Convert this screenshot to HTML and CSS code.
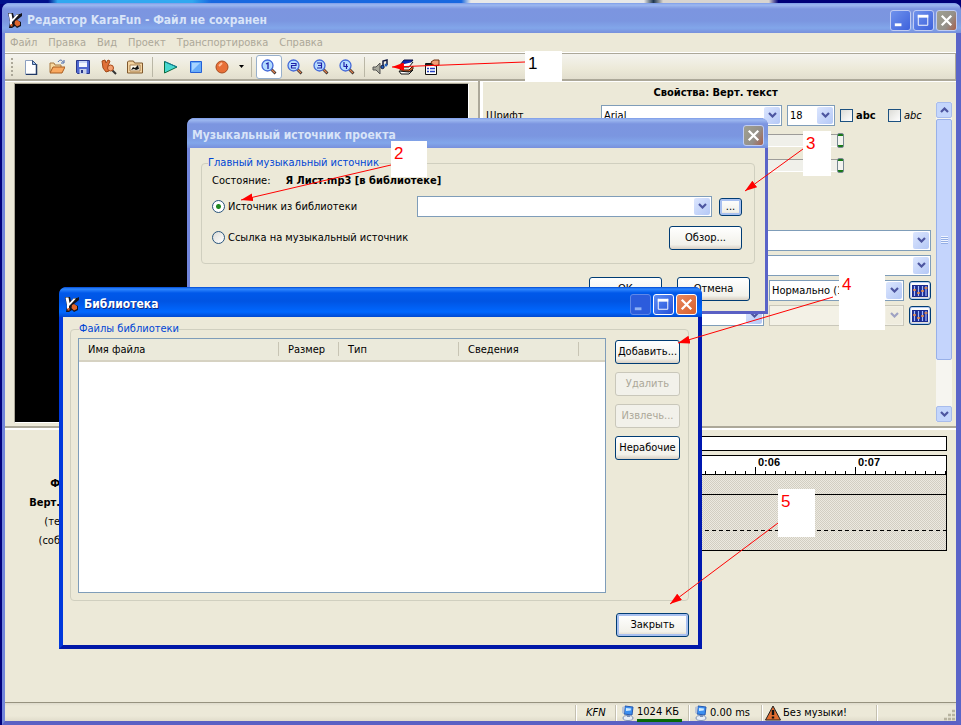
FILE: index.html
```
<!DOCTYPE html>
<html lang="ru">
<head>
<meta charset="utf-8">
<title>Редактор KaraFun</title>
<link rel="stylesheet" href="styles.css">
</head>
<body>
<svg class="defs" aria-hidden="true">
  <defs>
    <symbol id="logo" viewBox="0 0 16 16">
      <path d="M1 1h5l1 4 3-3h3l2-1v3l-5 4 4 2v4l-4 2-2-2-3 2H2l1-6z" fill="#14141c"/>
      <path d="M1.500 1.500h3L5.500 7l4-4.500h2.500L7 8l-2 2v3H3V9z" fill="#fff"/>
      <path d="M8 9l2-1 3 2v3l-3 1.500L7.500 12z" fill="#e0662c"/>
      <path d="M3.500 12h2v2.500h-2z" fill="#e0662c"/>
    </symbol>
    <symbol id="chevron" viewBox="0 0 9 6"><path d="M1 1l3.500 3.500L8 1" fill="none" stroke="#4d56a0" stroke-width="2.200"/></symbol>
    <symbol id="lens" viewBox="0 0 16 16">
      <path d="M10 10l4.500 4.500" stroke="#222" stroke-width="2.600"/><path d="M10 10l4 4" stroke="#e08050" stroke-width="1.400"/>
      <circle cx="6.500" cy="6.500" r="5.500" fill="#b4dcff" stroke="#4468d8" stroke-width="1.300"/>
    </symbol>
    <symbol id="mixer" viewBox="0 0 16 12">
      <rect width="16" height="12" fill="#1c2c90"/>
      <path d="M2.500 1v10M6.500 1v10M10.500 1v10M14 1v10" stroke="#a8bcff" stroke-width="1.200"/>
      <path d="M1 5h3M5 8h3M9 6h3M12.500 3h3" stroke="#f08838" stroke-width="1.500"/>
    </symbol>
    <symbol id="pc" viewBox="0 0 14 16">
      <path d="M4 1l8 1-1 8-8-1z" fill="#3c8ff0" stroke="#2458b0"/><path d="M5 3l5 .6-.3 2L5 6z" fill="#cfeaff"/>
      <path d="M1 2l3-1-1 8-2-1z" fill="#b8c4d8"/>
      <ellipse cx="7" cy="13" rx="5" ry="2.500" fill="#e8eef6" stroke="#8294b4"/><path d="M6 10h3v2H6z" fill="#7890b8"/>
    </symbol>
  </defs>
</svg>

<main class="window">
  <header class="titlebar">
    <svg class="i16"><use href="#logo"/></svg>
    <h1>Редактор KaraFun - Файл не сохранен</h1>
    <div class="caption">
      <button class="cap" aria-label="Свернуть"><svg class="i20" viewBox="0 0 20 20"><path d="M4 14.500h7" stroke="#fff" stroke-width="3"/></svg></button>
      <button class="cap" aria-label="Развернуть"><svg class="i20" viewBox="0 0 20 20"><path d="M4.500 4v11h10V4" fill="none" stroke="#fff"/><path d="M4 5.500h11" stroke="#fff" stroke-width="3"/></svg></button>
      <button class="cap cap-dim" aria-label="Закрыть окно"><svg class="i20" viewBox="0 0 20 20"><path d="M5 5l10 10M15 5l-10 10" stroke="#fff" stroke-width="2.400"/></svg></button>
    </div>
  </header>

  <nav class="menu">
    <button>Файл</button><button>Правка</button><button>Вид</button><button>Проект</button><button>Транспортировка</button><button>Справка</button>
  </nav>

  <div class="toolbar" role="toolbar">
    <span class="grip"></span>
    <button class="tool" aria-label="Новый"><svg class="i16" viewBox="0 0 16 16"><path d="M2.500 1.500h7l4 4v10h-11z" fill="#fff" stroke="#8ca0c0"/><path d="M13.500 5v10.500H3" fill="none" stroke="#223a66" stroke-width="1.500"/><path d="M9.500 1.500v4h4z" fill="#9fc0f0" stroke="#35507c"/></svg></button>
    <button class="tool" aria-label="Открыть"><svg class="i16" viewBox="0 0 16 16"><path d="M1 13V4h4l1 2h6v3" fill="#f7d9a0" stroke="#a87840"/><path d="M1 14L4 8h12l-3 6z" fill="#f9a960" stroke="#a85c20"/><path d="M9 3c2-3 4-2 5 0M15 1v3h-3" fill="none" stroke="#4464a8"/></svg></button>
    <button class="tool" aria-label="Сохранить"><svg class="i16" viewBox="0 0 16 16"><path d="M1.500 1.500h13v13h-12l-1-1z" fill="#5068d0" stroke="#29378c"/><path d="M4 2h8v6H4z" fill="#f2f6ff"/><path d="M4 3h8" stroke="#9db4ea"/><path d="M4.500 10h7v5h-7z" fill="#c8d0e8"/><path d="M6 11h2v3H6z" fill="#29378c"/></svg></button>
    <button class="tool" aria-label="Просмотр"><svg class="i16" viewBox="0 0 16 16"><path d="M1 2l3-1 1 3 2-3 2 1-2 5 1 5-3 1-3-4z" fill="#e07038" stroke="#a04818"/><path d="M11 11l4 4" stroke="#333" stroke-width="2"/><circle cx="9.500" cy="9" r="3" fill="#f4a070" stroke="#a84818"/></svg></button>
    <button class="tool" aria-label="Медиа"><svg class="i16" viewBox="0 0 16 16"><path d="M.5 14V3l1-1h5l1 2h8v10z" fill="#f3d3a0" stroke="#80582c"/><path d="M3 6h10v6H3z" fill="#fff8e8" stroke="#a88050"/><path d="M4 11l2-3 2 1 3-3 1 4-3 1-2-1z" fill="#111"/></svg></button>
    <span class="sep"></span>
    <button class="tool" aria-label="Пуск"><svg class="i16" viewBox="0 0 16 16"><path d="M2.500 2.500L15 8 2.500 14z" fill="#48d8d0" stroke="#0c6c40"/><path d="M2.500 2.500L15 8" stroke="#1480a0"/></svg></button>
    <button class="tool" aria-label="Стоп"><svg class="i16" viewBox="0 0 16 16"><path d="M2.500 2.500h11v11h-11z" fill="#68acf8" stroke="#2460d8"/><path d="M4 4h8L4 12z" fill="#a8d4ff"/></svg></button>
    <button class="tool" aria-label="Запись"><svg class="i16" viewBox="0 0 16 16"><circle cx="8" cy="8" r="6" fill="#e87038" stroke="#a84c20"/><path d="M5 7l3-3" stroke="#ffc09c" stroke-width="2"/></svg></button>
    <button class="tool tool-drop" aria-label="Варианты записи"><svg class="i5" viewBox="0 0 5 3"><path d="M0 0h5L2.500 3z"/></svg></button>
    <span class="sep"></span>
    <button class="tool tool-on" aria-label="Вид 1"><svg class="i16" viewBox="0 0 16 16"><use href="#lens"/><path d="M5 5l2-1v6" fill="none" stroke="#2020a8" stroke-width="1.300"/></svg></button>
    <button class="tool" aria-label="Вид 2"><svg class="i16" viewBox="0 0 16 16"><use href="#lens"/><path d="M4 4.500h5v2H4.500v2.500H9" fill="none" stroke="#2020a8" stroke-width="1.200"/></svg></button>
    <button class="tool" aria-label="Вид 3"><svg class="i16" viewBox="0 0 16 16"><use href="#lens"/><path d="M4 4h4.500v5H4M5 6.500h3" fill="none" stroke="#2020a8" stroke-width="1.200"/></svg></button>
    <button class="tool" aria-label="Вид 4"><svg class="i16" viewBox="0 0 16 16"><use href="#lens"/><path d="M5 3v4.500h4M7.500 5v5" fill="none" stroke="#2020a8" stroke-width="1.200"/></svg></button>
    <span class="sep sep-narrow"></span>
    <button class="tool" aria-label="Музыкальный источник"><svg class="i16" viewBox="0 0 16 16"><path d="M1 8h3l4-4v11l-4-4H1z" fill="#a8a89c" stroke="#555"/><path d="M11 8V2l4-1v5" fill="none" stroke="#101840" stroke-width="1.500"/><circle cx="10.500" cy="8" r="1.700" fill="#2060c0" stroke="#101840"/><circle cx="14" cy="6" r="1.500" fill="#2060c0"/></svg></button>
    <button class="tool" aria-label="Библиотека"><svg class="i16" viewBox="0 0 16 16"><path d="M6 1h9l-4 5H2z" fill="#1428b0" stroke="#081048"/><path d="M2 6v2h9l4-5" fill="#fff" stroke="#111"/><path d="M4 8l-2 3h9l4-4v3l-4 3H3" fill="#e06c30" stroke="#3c1808"/><path d="M1 12l2 3h8l4-4-4 2z" fill="#fff" stroke="#111"/></svg></button>
    <button class="tool" aria-label="Свойства"><svg class="i16" viewBox="0 0 16 16"><path d="M1.500 4.500h11v11h-11z" fill="#fff" stroke="#111"/><path d="M2 6h10" stroke="#222" stroke-width="2"/><path d="M3 9.500h2m1 0h5M3 12.500h2m1 0h5" stroke="#2440c0" stroke-width="1.500"/><path d="M7 3l3-2h5v5l-4 1-3-2z" fill="#f0a078" stroke="#703010"/></svg></button>
  </div>

  <section class="workspace">
    <div class="stage"><div class="video"></div></div>
    <div class="props">
      <form class="form">
        <h2>Свойства: Верт. текст</h2>
        <div class="row">
          <label class="row-label" for="font">Шрифт</label>
          <div class="combo grow"><select id="font"><option>Arial</option></select><svg class="drop"><use href="#chevron" x="4" y="5" width="9" height="6"/></svg></div>
          <div class="combo size-combo"><select aria-label="Размер шрифта"><option>18</option></select><svg class="drop"><use href="#chevron" x="4" y="5" width="9" height="6"/></svg></div>
          <label class="check bold"><input type="checkbox">abc</label>
          <label class="check italic"><input type="checkbox">abc</label>
        </div>
        <div class="row"><span class="row-label"></span><input class="slider" type="range" value="100" aria-label="Непрозрачность"></div>
        <div class="row"><span class="row-label"></span><input class="slider" type="range" value="100" aria-label="Контур"></div>
        <div class="row"></div>
        <div class="row"></div>
        <div class="row"><span class="row-label"></span><div class="combo grow"><select aria-label="Появление"></select><svg class="drop"><use href="#chevron" x="4" y="5" width="9" height="6"/></svg></div></div>
        <div class="row"><span class="row-label"></span><div class="combo grow"><select aria-label="Исчезание"></select><svg class="drop"><use href="#chevron" x="4" y="5" width="9" height="6"/></svg></div></div>
        <div class="row"><span class="row-label"></span><div class="combo grow"><select aria-label="Эффект"></select><svg class="drop"><use href="#chevron" x="4" y="5" width="9" height="6"/></svg></div><div class="combo mode"><select aria-label="Сглаживание"><option>Нормально (1</option></select><svg class="drop"><use href="#chevron" x="4" y="5" width="9" height="6"/></svg></div><button type="button" class="xp mix" aria-label="Настроить эффект"><svg><use href="#mixer"/></svg></button></div>
        <div class="row"><span class="row-label"></span><div class="combo grow"><select aria-label="Движение"></select><svg class="drop"><use href="#chevron" x="4" y="5" width="9" height="6"/></svg></div><div class="combo mode off"><select aria-label="Режим движения" disabled></select><svg class="drop"><use href="#chevron" x="4" y="5" width="9" height="6"/></svg></div><button type="button" class="xp mix" aria-label="Настроить движение"><svg><use href="#mixer"/></svg></button></div>
      </form>
      <div class="scroll">
        <button class="scroll-btn" aria-label="Вверх"><svg class="i9" viewBox="0 0 9 6"><path d="M1 5l3.500-3.500L8 5" fill="none" stroke="#4d56a0" stroke-width="2.200"/></svg></button>
        <div class="thumb"><span></span></div>
        <button class="scroll-btn last" aria-label="Вниз"><svg class="i9"><use href="#chevron"/></svg></button>
      </div>
    </div>
  </section>

  <section class="timeline">
    <div class="tracks"><b>Ф</b><b>Верт.</b><span>(те</span><span>(соб</span></div>
    <div class="lanes">
      <div class="overview"></div>
      <div class="grid">
        <div class="ruler"><span>0:06</span><span>0:07</span></div>
        <div class="lane lane-a"></div>
        <div class="lane lane-b"></div>
        <div class="lane lane-c"></div>
      </div>
    </div>
  </section>

  <footer class="status">
    <span class="cell kfn">KFN</span>
    <span class="cell mem"><svg class="ipc"><use href="#pc"/></svg><span class="meter">1024 КБ</span></span>
    <span class="cell lag"><svg class="ipc"><use href="#pc"/></svg>0.00 ms</span>
    <span class="cell music"><svg class="i16" viewBox="0 0 16 16"><path d="M8 1l7.500 14H.5z" fill="#e06c30" stroke="#222"/><path d="M8 5v5M8 11.500v2" stroke="#111" stroke-width="2.400"/></svg>Без музыки!</span>
    <span class="cell tail"><svg class="size-grip" viewBox="0 0 12 12"><path d="M8 2h3M4 6h3M8 6h3M0 10h3M4 10h3M8 10h3" stroke="#b8b4a0" stroke-width="2.500"/></svg></span>
  </footer>
</main>

<section class="dialog source" role="dialog" aria-labelledby="source-title">
  <header class="titlebar">
    <h1 id="source-title">Музыкальный источник проекта</h1>
    <div class="caption"><button class="cap cap-dim" aria-label="Закрыть диалог"><svg class="i20" viewBox="0 0 20 20"><path d="M5 5l10 10M15 5l-10 10" stroke="#fff" stroke-width="2.400"/></svg></button></div>
  </header>
  <form class="source-body">
    <fieldset>
      <legend>Главный музыкальный источник</legend>
      <p class="state"><span>Состояние:</span><b>Я Лист.mp3 [в библиотеке]</b></p>
      <div class="pick">
        <label class="radio"><input type="radio" name="src" checked>Источник из библиотеки</label>
        <div class="combo lib"><select aria-label="Файл из библиотеки"></select><svg class="drop"><use href="#chevron" x="4" y="5" width="9" height="6"/></svg></div>
        <button type="button" class="xp focus dots">...</button>
      </div>
      <div class="pick">
        <label class="radio"><input type="radio" name="src">Ссылка на музыкальный источник</label>
        <button type="button" class="xp wide">Обзор...</button>
      </div>
    </fieldset>
    <div class="actions"><button type="button" class="xp wide">ОК</button><button type="button" class="xp wide">Отмена</button></div>
  </form>
</section>

<section class="dialog library" role="dialog" aria-labelledby="library-title">
  <header class="titlebar">
    <svg class="i16"><use href="#logo"/></svg>
    <h1 id="library-title">Библиотека</h1>
    <div class="caption">
      <button class="cap faded" aria-label="Свернуть библиотеку" disabled><svg class="i20" viewBox="0 0 20 20"><path d="M4 14.500h7" stroke="#8fb0f4" stroke-width="3"/></svg></button>
      <button class="cap" aria-label="Развернуть библиотеку"><svg class="i20" viewBox="0 0 20 20"><path d="M4.500 4v11h10V4" fill="none" stroke="#fff"/><path d="M4 5.500h11" stroke="#fff" stroke-width="3"/></svg></button>
      <button class="cap cap-close" aria-label="Закрыть библиотеку"><svg class="i20" viewBox="0 0 20 20"><path d="M5 5l10 10M15 5l-10 10" stroke="#fff" stroke-width="2.400"/></svg></button>
    </div>
  </header>
  <div class="library-body">
    <fieldset>
      <legend>Файлы библиотеки</legend>
      <div class="files">
        <table>
          <colgroup><col><col class="c-size"><col class="c-type"><col class="c-info"><col class="c-rest"></colgroup>
          <thead><tr><th>Имя файла</th><th>Размер</th><th>Тип</th><th>Сведения</th><th></th></tr></thead>
        </table>
      </div>
      <div class="side">
        <button class="xp">Добавить...</button>
        <button class="xp" disabled>Удалить</button>
        <button class="xp" disabled>Извлечь...</button>
        <button class="xp">Нерабочие</button>
      </div>
    </fieldset>
    <div class="actions"><button class="xp wide focus">Закрыть</button></div>
  </div>
</section>

<div class="note n1">1</div>
<div class="note n2">2</div>
<div class="note n3">3</div>
<div class="note n4">4</div>
<div class="note n5">5</div>
<svg class="arrows" viewBox="0 0 961 725" aria-hidden="true">
  <defs><marker id="head" viewBox="0 0 12 8" refX="12" refY="4" markerWidth="12" markerHeight="8" markerUnits="userSpaceOnUse" orient="auto"><path d="M0 0l12 4-12 4z" fill="#f00"/></marker></defs>
  <g stroke="#f00">
    <path d="M525 62L392 67" marker-end="url(#head)"/>
    <path d="M391 165L241 200" marker-end="url(#head)"/>
    <path d="M803 149L745 191" marker-end="url(#head)"/>
    <path d="M833 297L678 343" marker-end="url(#head)"/>
    <path d="M778 523L670 604" marker-end="url(#head)"/>
  </g>
</svg>
</body>
</html>
```

FILE: styles.css
```
* { box-sizing: border-box; }

body {
  margin: 0;
  min-height: 100vh;
  display: flex;
  flex-direction: column;
  position: relative;
  padding: 3px 0 0 2px;
  background: linear-gradient(90deg, #00108c 0 5%, #30a8f0 6% 20%, #1868e0 22% 48%, #e8e8e8 49% 67%, #203850 68%, #d8d4d0 69% 80%, #000078 81%) top / 100% 4px no-repeat #00007c;
  font: 11px/14px "DejaVu Sans Condensed", "Noto Sans", sans-serif;
  color: #000;
}

button, select, input { font: inherit; color: inherit; margin: 0; }
button { padding: 0; border: 0; background: none; }
h1, h2, p { margin: 0; font-size: inherit; }
svg { display: block; flex: none; }

.defs { position: absolute; width: 0; height: 0; }
.i5 { width: 5px; height: 3px; }
.i9 { width: 9px; height: 6px; }
.i16 { width: 16px; height: 16px; }
.i20 { width: 19px; height: 19px; }
.ipc { width: 14px; height: 16px; }

/* Window frames */
.window, .dialog {
  display: flex;
  flex-direction: column;
  border: solid #7286dc;
  border-right-color: #5a64c8;
  border-bottom-color: #5a60c4;
  border-radius: 8px 8px 0 0;
  background: #ece9d8;
}
.window { flex: 1; border-width: 0 5px 4px 3px; }

.titlebar {
  display: flex;
  align-items: center;
  gap: 4px;
  height: 30px;
  margin: 0 -3px;
  padding: 4px 4px 0 5px;
  border-radius: 7px 7px 0 0;
  background: linear-gradient(#7d9ce8 0, #9db8f0 2px, #7c95e0 6px, #7b96e0 18px, #82a6ea 25px, #7890dc 30px);
  color: #d8e4f8;
}
.window .titlebar { margin-right: -5px; }
.titlebar h1 { font-size: 12px; line-height: 18px; font-weight: bold; }
.caption { display: flex; gap: 2px; margin-left: auto; }
.cap {
  width: 21px;
  height: 21px;
  border: 1px solid #c0ccf4;
  border-radius: 3px;
  background: linear-gradient(135deg, #6f92ec, #3e62dc);
}
.cap-dim { background: linear-gradient(120deg, #a0a090, #94908a 60%, #a8604c); }

/* Menu and toolbar */
.menu { display: flex; gap: 11px; height: 20px; padding: 2px 5px; color: #aca899; }
.toolbar {
  display: flex;
  align-items: center;
  height: 28px;
  padding-left: 4px;
  border: 1px solid #aca899;
  border-width: 1px 1px 2px 0;
  box-shadow: 0 -1px #fff, 0 1px #fff;
  background: linear-gradient(#f4f3ee, #ece9d8 60%, #e2dece);
}
.grip { width: 9px; height: 18px; background: repeating-linear-gradient(#aca899 0 2px, transparent 2px 4px) 2px 0 / 2px 100% no-repeat; }
.tool { display: flex; align-items: center; justify-content: center; width: 26px; height: 24px; }
.tool-drop { width: 12px; }
.tool-on { border: 1px solid #98b0cc; border-radius: 3px; background: #fff; }
.sep { width: 9px; height: 20px; background: linear-gradient(#bab7a6, #bab7a6) 4px 0 / 1px 100% no-repeat; }
.sep-narrow { width: 7px; }

/* Upper half */
.workspace { display: grid; grid-template-columns: minmax(0, 475fr) minmax(0, 476fr); height: 347px; border-bottom: 2px solid #aca899; box-shadow: 0 2px #fff; }
.stage { padding: 2px 9px 3px; border-right: 2px solid #aca899; }
.video { height: 100%; border: 1px solid #aca899; border-right-color: #fff; border-bottom-color: #fff; background: #000; }
.props { display: flex; padding: 5px 4px 4px 3px; border-left: 3px solid #fff; }
.form { flex: 1; min-width: 0; padding-right: 5px; }
.form h2 { height: 17px; padding-left: 14px; font-weight: bold; text-align: center; }
.row { display: flex; align-items: center; gap: 5px; height: 25px; }
.row-label { flex: none; width: 110px; }

.combo { position: relative; height: 21px; min-width: 0; }
.combo select { appearance: none; display: block; width: 100%; height: 100%; padding: 0 20px 0 2px; border: 1px solid #7f9db9; border-radius: 0; background: #fff; opacity: 1; }
.drop { position: absolute; top: 2px; right: 2px; width: 16px; height: 17px; border-radius: 2px; background: linear-gradient(135deg, #dce6fe, #b4c8f6); pointer-events: none; }
.grow { flex: 1; }
.size-combo { width: 48px; }
.mode { width: 135px; }
.off select { background: #f3f1e6; border-color: #c9c7ba; }
.off .drop { background: #ece9d8; opacity: .5; }

.check { display: flex; align-items: center; gap: 3px; width: 43px; }
.check input { appearance: none; flex: none; width: 13px; height: 13px; border: 1px solid #1c5180; background: linear-gradient(135deg, #dcdcd7, #fff); }
.bold { font-weight: bold; }
.italic { font-style: italic; }

.slider { appearance: none; flex: 1; height: 14px; margin-right: 87px; background: none; }
.slider::-webkit-slider-runnable-track { height: 13px; border-top: 1px solid #9d9c99; border-bottom: 1px solid #fff; background: #f0f0ea; }
.slider::-webkit-slider-thumb { appearance: none; width: 7px; height: 15px; margin-top: -2px; border: 1px solid #778892; border-radius: 2px; background: linear-gradient(#187818 0 2px, #f3f3ef 2px 11px, #187818 11px); }

.xp { height: 24px; border: 1px solid #003c74; border-radius: 3px; background: linear-gradient(#fff, #f2f1ea 80%, #d8d0c4); white-space: nowrap; }
.xp:disabled { border-color: #c9c7ba; background: #f2f1ea; color: #aca899; }
.focus { box-shadow: inset 0 0 0 2px #a8c0f0; }
.wide { width: 73px; }
.mix { display: flex; align-items: center; justify-content: center; width: 22px; height: 19px; box-shadow: inset 0 0 0 1px #b8ccf4; }
.mix svg { width: 16px; height: 12px; }

.scroll { display: flex; flex-direction: column; width: 16px; margin-top: 16px; background: #f6f5f0; }
.scroll-btn { display: flex; align-items: center; justify-content: center; height: 16px; border: 1px solid #a8bcec; border-radius: 2px; background: #c4d6fc; }
.thumb { display: grid; place-items: center; height: 241px; margin-top: 1px; border: 1px solid #98b0e8; border-radius: 2px; background: #c4d4fc; }
.thumb span { width: 7px; height: 8px; background: repeating-linear-gradient(#f0f4ff 0 1px, #94aee4 1px 2px); }
.last { margin-top: auto; }

/* Timeline */
.timeline { flex: 1; display: flex; padding: 8px 9px 0 0; }
.tracks { display: flex; flex-direction: column; gap: 5px; width: 55px; padding-top: 41px; text-align: right; }
.lanes { flex: 1; }
.overview { height: 15px; margin-bottom: 4px; border: 1px solid #000; background: #fff; }
.grid { border: 1px solid #000; background: repeating-conic-gradient(#d2cec2 0 25%, #ece9e0 0 50%) 0 0 / 2px 2px; }
.ruler {
  display: flex;
  justify-content: flex-end;
  height: 19px;
  border-bottom: 1px solid #000;
  background:
    repeating-linear-gradient(270deg, transparent 0 90px, #000 90px 91px, transparent 91px 100px) right bottom / 100% 7px no-repeat,
    repeating-linear-gradient(270deg, #000 0 1px, transparent 1px 10px) right bottom / 100% 3px no-repeat #fff;
  font: bold 11px/13px "Liberation Sans", sans-serif;
}
.ruler span { width: 100px; padding-left: 3px; }
.ruler span:last-child { width: 91px; }
.lane-a { height: 20px; border-bottom: 1px solid #000; }
.lane-b { height: 36px; background: repeating-linear-gradient(90deg, #000 0 4px, transparent 4px 7px) bottom / 100% 1px no-repeat; }
.lane-c { height: 19px; }

/* Status bar */
.status { display: flex; justify-content: flex-end; height: 19px; border-top: 1px solid #96927f; background: linear-gradient(#dedbcc, #ece9d8 3px, #ece9d8 13px, #e0dccb); }
.cell { display: flex; align-items: center; gap: 2px; margin-top: 2px; padding-left: 5px; border-left: 1px solid #c4c0b0; box-shadow: inset 1px 0 #fff; white-space: nowrap; }
.kfn { width: 40px; padding-left: 10px; font-style: italic; }
.mem { width: 73px; }
.meter { width: 45px; border-bottom: 3px solid #086808; }
.lag { width: 73px; }
.music { width: 115px; padding-left: 3px; }
.tail { width: 80px; align-items: flex-end; justify-content: flex-end; }
.size-grip { width: 12px; height: 12px; }

/* Dialogs */
fieldset { min-width: 0; margin: 0; border: 1px solid #d0cfbf; border-radius: 4px; }
legend { margin-left: 1px; padding: 0; color: #0046d5; }
.actions { display: flex; justify-content: flex-end; gap: 15px; }

.source { position: absolute; left: 187px; top: 118px; width: 581px; height: 196px; border-width: 0 3px 3px; }
.source-body { padding: 8px 10px 0 11px; }
.source fieldset { height: 108px; padding: 4px 12px 0 5px; }
.source .actions { margin-top: 13px; padding-right: 5px; }
.state { display: flex; gap: 15px; padding-left: 5px; }
.pick { display: flex; align-items: center; justify-content: space-between; height: 31px; padding-left: 5px; }
.state + .pick { margin-top: 3px; }
.radio { display: flex; align-items: center; gap: 3px; white-space: nowrap; }
.radio input { appearance: none; width: 13px; height: 13px; border: 1px solid #28547c; border-radius: 50%; background: linear-gradient(135deg, #dcdcd7, #fff); }
.radio input:checked { background: radial-gradient(circle, #208820 0 2px, #fff 3px); }
.lib { width: 295px; margin-left: auto; margin-right: 7px; }
.dots { width: 23px; height: 18px; line-height: 14px; }

.library { position: absolute; left: 59px; top: 287px; width: 643px; height: 362px; border: solid #0038dc; border-width: 0 4px 4px; border-right-color: #0018b0; border-bottom-color: #0018a8; }
.library .titlebar { margin: 0 -4px; padding-right: 5px; background: linear-gradient(#0048d0 0, #3088ff 2px, #0058ea 6px, #0054e3 14px, #0068ff 25px, #0048d0 30px); color: #fff; text-shadow: 1px 1px #102880; }
.library .cap { border-color: #fff; background: linear-gradient(135deg, #5c8cf4, #2450d8); }
.library .faded { border-color: #6088e8; background: #2c5cdc; }
.library .cap-close { background: linear-gradient(135deg, #e88860, #d8602c); }
.library-body { padding: 5px 9px 0 7px; }
.library fieldset { display: flex; gap: 9px; height: 279px; padding: 2px 8px 7px 7px; }
.library .actions { margin-top: 12px; }
.files { flex: 1; border: 1px solid #7f9db9; background: #fff; }
.files table { width: 100%; border-collapse: collapse; table-layout: fixed; }
.files th { height: 22px; padding: 1px 0 0 9px; border-bottom: 2px solid #d6d2c2; background: linear-gradient(#c8c5b4, #c8c5b4) right 3px / 1px 14px no-repeat #ebeadb; font-weight: normal; text-align: left; }
.files th:last-child { background: #ebeadb; }
.c-size { width: 60px; }
.c-type, .c-info { width: 120px; }
.c-rest { width: 26px; }
.side { display: flex; flex-direction: column; gap: 8px; width: 65px; padding-top: 2px; }

/* Numbered callouts */
.note { position: absolute; padding: 3px; background: #fff; color: #f00; font: 17px/20px "Liberation Sans", sans-serif; }
.n1 { left: 525px; top: 51px; width: 37px; height: 31px; color: #000; }
.n2 { left: 391px; top: 141px; width: 36px; height: 36px; }
.n3 { left: 803px; top: 131px; width: 28px; height: 45px; }
.n4 { left: 839px; top: 275px; width: 46px; height: 55px; padding-top: 0; }
.n5 { left: 778px; top: 489px; width: 37px; height: 48px; }
.arrows { position: absolute; left: 0; top: 0; width: 961px; height: 725px; pointer-events: none; }
```
